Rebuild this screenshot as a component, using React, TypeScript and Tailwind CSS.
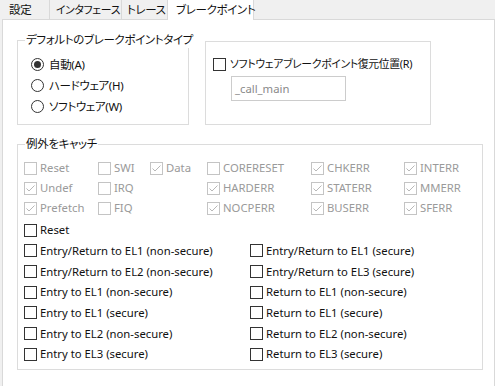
import React from "react";

const FONT = "font-['Noto_Sans','Noto_Sans_CJK_JP',sans-serif] [font-feature-settings:'palt']";
const JP = "whitespace-nowrap text-[11.5px] tracking-[-0.35px] [font-feature-settings:'palt']";
const JPS = "whitespace-nowrap text-[10.8px] tracking-[-0.3px] [font-feature-settings:'palt']";

function Check({ disabled = false, checked = false }: { disabled?: boolean; checked?: boolean }) {
  return (
    <span
      className={`inline-flex h-[13px] w-[13px] shrink-0 items-center justify-center border bg-white ${
        disabled ? "border-[#c4c4c4]" : "border-[#333333]"
      }`}
    >
      {checked && (
        <svg width="11" height="11" viewBox="0 0 11 11">
          <path d="M1.5 5.5 L4 8 L9.5 2.5" fill="none" stroke={disabled ? "#b8b8b8" : "#333"} strokeWidth="1" />
        </svg>
      )}
    </span>
  );
}

function CheckItem({ label, disabled = false, checked = false }: { label: string; disabled?: boolean; checked?: boolean }) {
  return (
    <div className="flex h-full items-center gap-[3px]">
      <Check disabled={disabled} checked={checked} />
      <span className={`whitespace-nowrap ${disabled ? "text-[#9a9a9a]" : "text-[#111]"}`}>{label}</span>
    </div>
  );
}

function Radio({ label, selected = false }: { label: string; selected?: boolean }) {
  return (
    <div className="flex h-[21px] items-center gap-[5px]">
      <span className="flex h-[13px] w-[13px] shrink-0 items-center justify-center rounded-full border border-[#333] bg-white">
        {selected && <span className="h-[7px] w-[7px] rounded-full bg-[#333]" />}
      </span>
      <span className={JP}>{label}</span>
    </div>
  );
}

const disabledRows: [string, boolean][][] = [
  [["Reset", false], ["SWI", false], ["Data", true], ["CORERESET", false], ["CHKERR", true], ["INTERR", true]],
  [["Undef", true], ["IRQ", false], ["", false], ["HARDERR", true], ["STATERR", true], ["MMERR", true]],
  [["Prefetch", true], ["FIQ", false], ["", false], ["NOCPERR", true], ["BUSERR", true], ["SFERR", true]],
];

const pairs: [string, string][] = [
  ["Entry/Return to EL1 (non-secure)", "Entry/Return to EL1 (secure)"],
  ["Entry/Return to EL2 (non-secure)", "Entry/Return to EL3 (secure)"],
  ["Entry to EL1 (non-secure)", "Return to EL1 (non-secure)"],
  ["Entry to EL1 (secure)", "Return to EL1 (secure)"],
  ["Entry to EL2 (non-secure)", "Return to EL2 (non-secure)"],
  ["Entry to EL3 (secure)", "Return to EL3 (secure)"],
];

export default function App() {
  return (
    <div className={`flex h-[386px] w-[495px] flex-col overflow-hidden bg-[#f0f0f0] text-[11.3px] leading-[16px] text-[#111] ${FONT}`}>
      {/* tabs */}
      <div className="flex h-[20px] shrink-0 items-start">
        <div className="flex h-[19px] w-[50px] items-center border-r border-[#d9d9d9] pl-[9px]"><span className={JP}>設定</span></div>
        <div className="flex h-[19px] w-[72px] items-center border-r border-[#d9d9d9] pl-[6px]"><span className={JPS}>インタフェース</span></div>
        <div className="flex h-[19px] w-[45px] items-center pl-[5px]"><span className={JP}>トレース</span></div>
        <div className="relative z-10 flex h-[20px] w-[87px] items-center border-l border-r border-[#d9d9d9] bg-white pl-[8px]">
          <span className={JP}>ブレークポイント</span>
        </div>
      </div>
      {/* page */}
      <div className="-mt-px ml-[2px] flex-1 border border-b-0 border-[#d9d9d9] bg-white pl-[14px] pt-[20px]">
        <div className="flex items-start gap-[16px]">
          {/* group 1 */}
          <div className="relative h-[85px] w-[172px] border border-[#dcdcdc] pl-[13px] pt-[13px]">
            <span className={`absolute left-[7px] top-[-9px] bg-white px-[1px] ${JP}`}>デフォルトのブレークポイントタイプ</span>
            <Radio label="自動(A)" selected />
            <Radio label="ハードウェア(H)" />
            <Radio label="ソフトウェア(W)" />
          </div>
          {/* group 2 */}
          <div className="mt-[1px] h-[84px] w-[226px] border border-[#dcdcdc] pl-[7px] pt-[14px]">
            <div className="flex h-[16px] items-center gap-[4px]">
              <Check />
              <span className={JPS}>ソフトウェアブレークポイント復元位置(R)</span>
            </div>
            <div className="ml-[18px] mt-[4px] flex h-[25px] w-[115px] items-center border border-[#cccccc] pl-[3px] text-[#8a8a8a]">
              _call_main
            </div>
          </div>
        </div>
        {/* group 3 */}
        <div className="relative mt-[19px] h-[226px] w-[466px] border border-[#dcdcdc] pl-[6px] pt-[13px]">
          <span className={`absolute left-[7px] top-[-9px] bg-white px-[1px] ${JP}`}>例外をキャッチ</span>
          <div className="grid grid-cols-[74px_52px_57px_104px_93px_1fr]">
            {disabledRows.flat().map(([label, checked], i) => (
              <div key={i} className="h-[20px]">
                {label ? <CheckItem label={label} checked={checked} disabled /> : null}
              </div>
            ))}
          </div>
          <div className="mt-[2px] grid grid-cols-[226px_1fr]">
            <div className="h-[20.67px]">
              <CheckItem label="Reset" />
            </div>
            <div className="h-[20.67px]" />
            {pairs.map(([a, b]) => (
              <React.Fragment key={a}>
                <div className="h-[20.67px]">
                  <CheckItem label={a} />
                </div>
                <div className="h-[20.67px]">
                  <CheckItem label={b} />
                </div>
              </React.Fragment>
            ))}
          </div>
        </div>
      </div>
    </div>
  );
}
